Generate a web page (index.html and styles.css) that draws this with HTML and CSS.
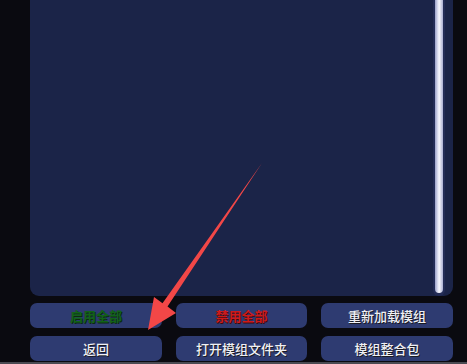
FILE: index.html
```html
<!DOCTYPE html>
<html lang="zh-CN">
<head>
    <meta charset="UTF-8">
    <meta name="viewport" content="width=device-width, initial-scale=1.0">
    <title>模组列表</title>
    <link rel="stylesheet" href="styles.css">
</head>
<body>
    <div class="screen">
        <div class="mod-list">
            <div class="list-body"></div>
            <div class="scroll-track">
                <div class="scroll-thumb"></div>
            </div>
        </div>
        <div class="buttons">
            <button class="btn green">启用全部</button>
            <button class="btn red">禁用全部</button>
            <button class="btn">重新加载模组</button>
            <button class="btn">返回</button>
            <button class="btn">打开模组文件夹</button>
            <button class="btn">模组整合包</button>
        </div>
        <div class="bottom-line"></div>

        <!-- annotation arrow -->
        <svg class="arrow" width="467" height="364" viewBox="0 0 467 364">
            <polygon points="262,163 167.5,306.6 176,313 148,330 154,297 162.5,303.3" fill="#f24747"/>
        </svg>
    </div>
</body>
</html>
```

FILE: styles.css
```css
body {
    margin: 0;
    background-color: #0a0a10;
    font-family: "Noto Sans CJK SC", "Noto Sans", sans-serif;
}
.screen {
    position: relative;
    width: 467px;
    height: 364px;
    overflow: hidden;
    padding: 0 14px 0 30px;
    box-sizing: border-box;
    display: flex;
    flex-direction: column;
}
.mod-list {
    height: 296px;
    background-color: #1b2448;
    border-radius: 0 0 9px 9px;
    display: flex;
}
.list-body {
    flex: 1;
}
.scroll-track {
    width: 12px;
    margin-right: 8px;
    padding-bottom: 3px;
    background-color: #232c56;
    border-radius: 0 0 6px 6px;
    display: flex;
    justify-content: center;
}
.scroll-thumb {
    width: 8px;
    height: 293px;
    border-radius: 0 0 4px 4px;
    background: linear-gradient(to right, #9aa0c8, #e6e8f6 40%, #f4f4fb 55%, #a9aed2);
}
.buttons {
    display: grid;
    grid-template-columns: 132px 131px 132px;
    column-gap: 14px;
    row-gap: 8px;
    margin-top: 7px;
}
.btn {
    height: 25px;
    padding: 0;
    border: none;
    border-radius: 7px;
    background-color: #2e3b71;
    color: #f0f0f4;
    font-family: "Noto Sans CJK SC", sans-serif;
    font-size: 13px;
    font-weight: 500;
    text-shadow: 1px 1px 0 #1a1a22;
}
.btn.green {
    color: #12621a;
    font-weight: bold;
    text-shadow: 1px 1px 0 #0c2a10;
}
.btn.red {
    color: #cc1a1c;
    font-weight: bold;
    text-shadow: 1px 1px 0 #3a0a0c;
}
.bottom-line {
    margin-top: auto;
    margin-left: -30px;
    margin-right: -14px;
    height: 2px;
    background-color: #4a4a52;
}
.arrow {
    position: absolute;
    left: 0;
    top: 0;
}
```
